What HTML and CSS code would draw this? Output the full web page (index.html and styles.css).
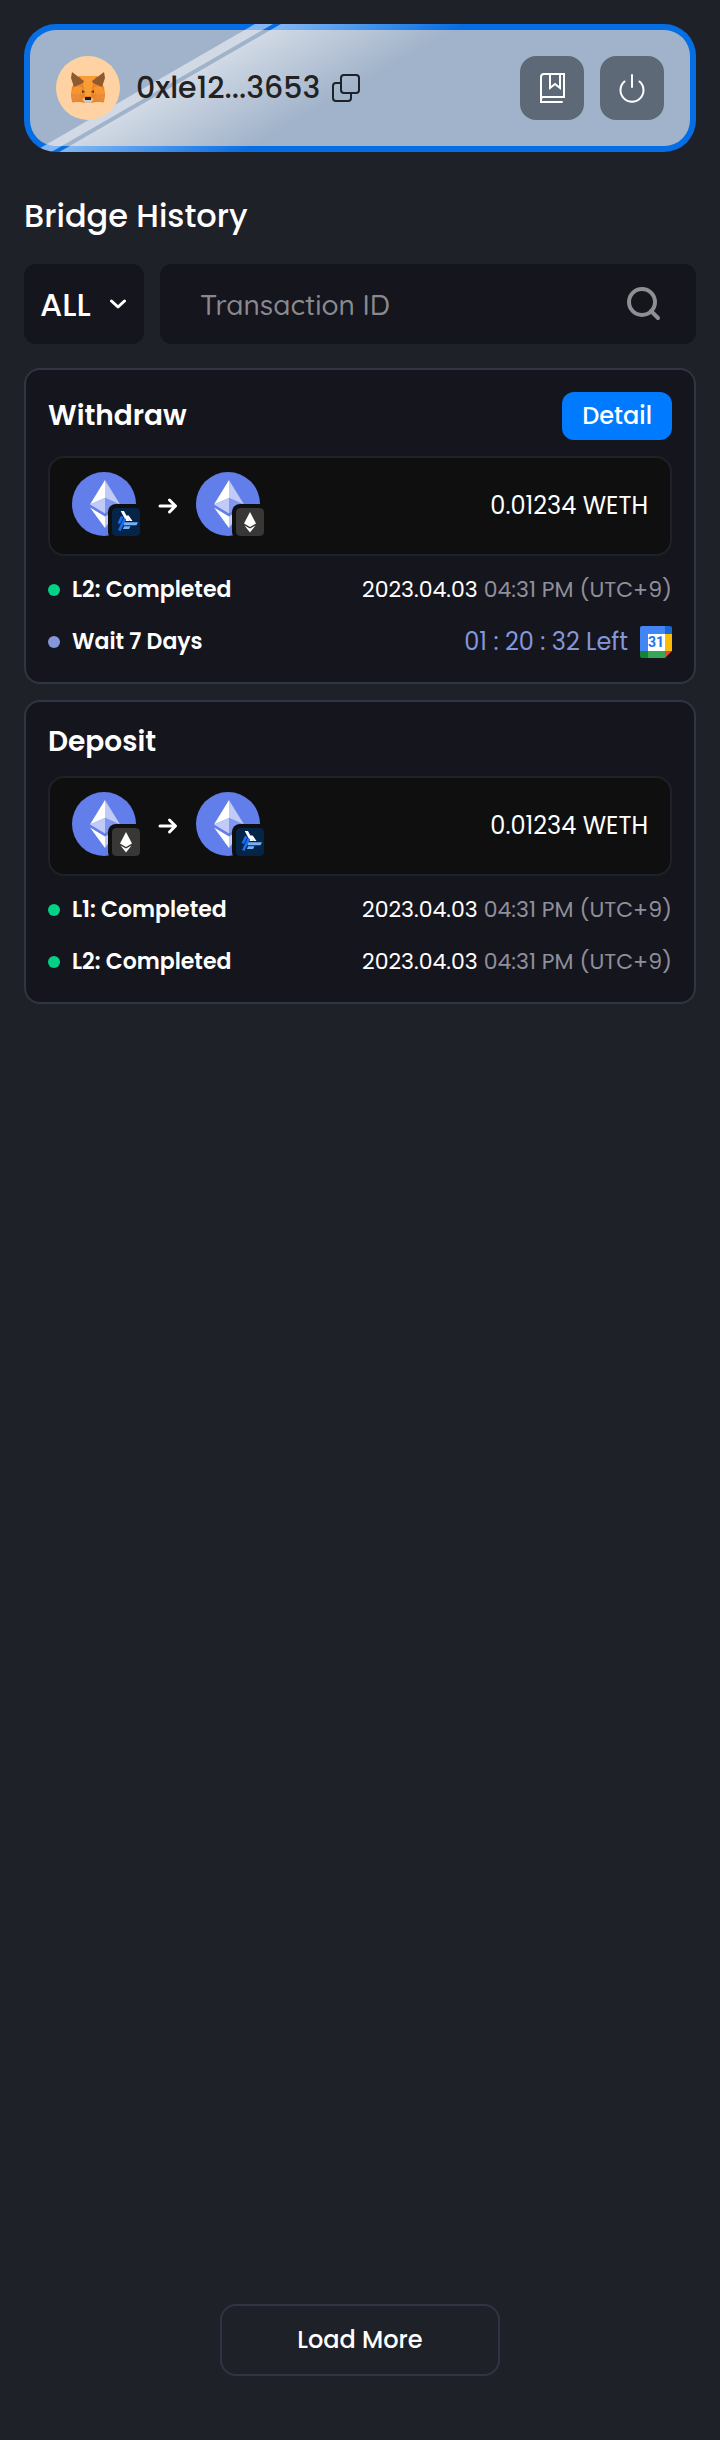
FILE: index.html
```html
<!DOCTYPE html>
<html lang="en">
<head>
<meta charset="utf-8">
<meta name="viewport" content="width=device-width, initial-scale=1">
<title>Bridge History</title>
<link rel="stylesheet" href="styles.css">
</head>
<body>
<svg class="sprite" aria-hidden="true">
  <symbol id="eth" viewBox="0 0 64 64">
    <circle cx="32" cy="32" r="32" fill="#627eea"/>
    <path d="M33 8v18L18 32.500z" fill="#fff"/>
    <path d="M33 8v18l15 6.500z" fill="#c1cbf7"/>
    <path d="M18 32.500 33 26v15.500z" fill="#c1cbf7"/>
    <path d="M33 26l15 6.500-15 9z" fill="#8298ee"/>
    <path d="M18 35.500 33 44.500V56z" fill="#fff"/>
    <path d="M33 44.500l15-9L33 56z" fill="#c1cbf7"/>
  </symbol>
  <symbol id="layer1" viewBox="0 0 28 28">
    <rect width="28" height="28" rx="4" fill="#383736"/>
    <path d="M14 4l6 11.500-6 3.500-6-3.500z" fill="#fff"/>
    <path d="M8.500 17.500 14 20.500l5.500-3L14 24.500z" fill="#fff"/>
  </symbol>
  <symbol id="layer2" viewBox="0 0 28 28">
    <rect width="28" height="28" rx="4" fill="#042548"/>
    <path d="M8.700 3H12l5.300 10H14zM13.800 7.500h2.900L20.500 13h-2.800z" fill="#fff"/>
    <path d="M10.300 8.300 6.800 15.500M13 10.500 7.300 22.500" fill="none" stroke="#1b6df0" stroke-width="2.800"/>
    <path d="M12.500 14.300H26l-1.500 3H11.500zM12.200 18.300H18.500l-1.500 2.700H10.800z" fill="#74b2f8"/>
  </symbol>
  <symbol id="arrow" viewBox="0 0 20 20">
    <path d="M2 10h15M11.500 4l6 6-6 6" fill="none" stroke="#fff" stroke-width="3" stroke-linecap="round" stroke-linejoin="round"/>
  </symbol>
</svg>
<main class="page">
  <header class="wallet">
    <svg class="avatar" viewBox="0 0 64 64" role="img" aria-label="MetaMask">
      <circle cx="32" cy="32" r="32" fill="#ffd2a3"/>
      <path d="M23 20h18l7 11 1 8-1 7-9 0-3 1h-8l-3-1-9 0-1-7 1-8z" fill="#ee8420"/>
      <path d="M24 20h16l-4 11-1 9h-6l-1-9z" fill="#f99d37"/>
      <path d="M18 30l8 1 1 7H15z M46 30l-8 1-1 7h12z" fill="#f6942f"/>
      <path d="M15 38h9l1 5-8 4z M49 38h-9l-1 5 8 4z" fill="#e98b3a"/>
      <path d="M16 16l12 9-1 2-9 4-3-9z M48 16l-12 9 1 2 9 4 3-9z" fill="#8f5a30"/>
      <path d="M26 34l3 2-3 1z M38 34l-3 2 3 1z" fill="#393939"/>
      <path d="M26 43l3-1h6l3 1-3 4h-6z" fill="#d0c3b8"/>
      <path d="M29 41h6v3h-6z" fill="#1c1c1c"/>
    </svg>
    <span class="address">0xle12...3653</span>
    <button class="copy" type="button" aria-label="Copy address">
      <svg viewBox="0 0 28 28" width="28" height="28"><path d="M9 9H4a3 3 0 0 0-3 3v12a3 3 0 0 0 3 3h12a3 3 0 0 0 3-3v-5" /><rect x="9" y="1" width="18" height="18" rx="3"/></svg>
    </button>
    <div class="actions">
      <button class="tile" type="button" aria-label="History">
        <svg viewBox="0 0 32 32"><path d="M5 30V5q0-3 3-3h20v23H7q-2 0-2 2.500V30h21M14 2v14l5-4 5 4V2"/></svg>
      </button>
      <button class="tile" type="button" aria-label="Disconnect">
        <svg viewBox="0 0 32 32"><path d="M16 3v12M8.500 9.500a11.500 11.500 0 1 0 15 0"/></svg>
      </button>
    </div>
  </header>

  <h1 class="title">Bridge History</h1>

  <form class="filters">
    <div class="picker">
      <select class="select" aria-label="Transaction type"><option>ALL</option><option>Deposit</option><option>Withdraw</option></select>
      <svg class="chevron" viewBox="0 0 16 16"><path d="M1.500 5l6.500 6 6.500-6"/></svg>
    </div>
    <label class="search">
      <input class="search-input" type="text" placeholder="Transaction ID" aria-label="Transaction ID">
      <svg class="search-icon" viewBox="0 0 36 36"><circle cx="16" cy="16" r="13"/><path d="M25 25l7 7"/></svg>
    </label>
  </form>

  <section class="cards">
    <article class="card">
      <div class="card-head"><h2 class="card-title">Withdraw</h2><button class="detail" type="button">Detail</button></div>
      <div class="transfer">
        <span class="token"><svg class="coin"><use href="#eth"/></svg><svg class="badge"><use href="#layer2"/></svg></span>
        <svg class="arrow"><use href="#arrow"/></svg>
        <span class="token"><svg class="coin"><use href="#eth"/></svg><svg class="badge"><use href="#layer1"/></svg></span>
        <span class="amount">0.01234 WETH</span>
      </div>
      <div class="row"><span class="dot"></span><span class="status">L2: Completed</span><time class="date">2023.04.03 <span class="hour">04:31 PM (UTC+9)</span></time></div>
      <div class="row"><span class="dot dot-wait"></span><span class="status">Wait 7 Days</span><span class="countdown">01 : 20 : 32 Left</span>
        <svg class="calendar" viewBox="0 0 32 32" role="img" aria-label="Google Calendar">
          <path d="M2 0h23v8H8v17H0V2q0-2 2-2z" fill="#4285f4"/>
          <path d="M25 0h5q2 0 2 2v6h-7z" fill="#1967d2"/>
          <path d="M25 8h7v17h-7z" fill="#fbbc04"/>
          <path d="M0 25h8v7H2q-2 0-2-2z" fill="#188038"/>
          <path d="M8 25h17v7H8z" fill="#34a853"/>
          <path d="M25 25h7l-7 7z" fill="#ea4335"/>
          <path d="M8 8h17v17H8z" fill="#fff"/>
          <text x="16" y="21" text-anchor="middle" class="calendar-day">31</text>
        </svg>
      </div>
    </article>

    <article class="card">
      <div class="card-head"><h2 class="card-title">Deposit</h2></div>
      <div class="transfer">
        <span class="token"><svg class="coin"><use href="#eth"/></svg><svg class="badge"><use href="#layer1"/></svg></span>
        <svg class="arrow"><use href="#arrow"/></svg>
        <span class="token"><svg class="coin"><use href="#eth"/></svg><svg class="badge"><use href="#layer2"/></svg></span>
        <span class="amount">0.01234 WETH</span>
      </div>
      <div class="row"><span class="dot"></span><span class="status">L1: Completed</span><time class="date">2023.04.03 <span class="hour">04:31 PM (UTC+9)</span></time></div>
      <div class="row"><span class="dot"></span><span class="status">L2: Completed</span><time class="date">2023.04.03 <span class="hour">04:31 PM (UTC+9)</span></time></div>
    </article>
  </section>

  <button class="more" type="button">Load More</button>
</main>
</body>
</html>
```
FILE: styles.css
```css
* { box-sizing: border-box; }
body {
  margin: 0;
  background: #1f2128;
  color: #fff;
  font-family: Poppins, Inter, "Open Sans", sans-serif;
}
button, input, select { font: inherit; color: inherit; }
button { border: 0; padding: 0; background: none; cursor: pointer; }
h1, h2 { margin: 0; font-weight: 500; }
svg { display: block; flex: none; }
.sprite { position: absolute; width: 0; height: 0; }

.page {
  display: flex;
  flex-direction: column;
  min-height: 100vh;
  padding: 24px 24px 64px;
}

.wallet {
  display: flex;
  align-items: center;
  padding: 26px;
  border: 6px solid transparent;
  border-radius: 32px;
  background:
    linear-gradient(150deg, transparent 115px, #ffffff80 116px, #ffffff80 124px, transparent 125px, transparent 128px, #ffffff80 129px, transparent 220px) border-box,
    linear-gradient(#a1b3ca, #a1b3ca) padding-box,
    #066ee5 border-box;
}
.avatar { width: 64px; height: 64px; }
.address {
  margin: 0 12px 0 16px;
  color: #222;
  font-size: 30px;
  line-height: 48px;
  font-weight: 500;
}
.copy svg { fill: none; stroke: #1f2128; stroke-width: 2; }
.actions { display: flex; gap: 16px; margin-left: auto; }
.tile {
  display: grid;
  place-items: center;
  width: 64px;
  height: 64px;
  border-radius: 16px;
  background: #5e6978;
}
.tile svg { width: 32px; height: 32px; fill: none; stroke: #fff; stroke-width: 2; stroke-linecap: round; }

.title { margin: 40px 0 24px; font-size: 32px; line-height: 48px; }

.filters { display: flex; gap: 16px; margin-bottom: 24px; }
.picker { position: relative; flex: none; width: 120px; }
.select {
  width: 100%;
  height: 80px;
  padding: 0 16px;
  border: 0;
  border-radius: 12px;
  background: #15151e;
  font-size: 32px;
  font-weight: 500;
  appearance: none;
}
.chevron {
  position: absolute;
  top: 32px;
  right: 18px;
  width: 16px;
  height: 16px;
  fill: none;
  stroke: #fff;
  stroke-width: 3;
  stroke-linecap: round;
  stroke-linejoin: round;
  pointer-events: none;
}
.search {
  display: flex;
  flex: 1;
  align-items: center;
  min-width: 0;
  padding: 0 34px 0 40px;
  border-radius: 12px;
  background: #15151e;
}
.search-input {
  flex: 1;
  min-width: 0;
  height: 80px;
  padding: 0;
  border: 0;
  outline: 0;
  background: none;
  font-family: Quicksand, Poppins, Inter, sans-serif;
  font-size: 28px;
  font-weight: 500;
}
.search-input::placeholder { color: #8a8a8e; opacity: 1; }
.search-icon { width: 36px; height: 36px; fill: none; stroke: #8f8e93; stroke-width: 4; stroke-linecap: round; }

.cards { display: flex; flex-direction: column; gap: 16px; }
.card {
  display: flex;
  flex-direction: column;
  gap: 16px;
  padding: 22px;
  border: 2px solid #313442;
  border-radius: 16px;
  background: #15151e;
}
.card-head { display: flex; align-items: center; justify-content: space-between; }
.card-title { font-size: 28px; line-height: 36px; font-weight: 600; }
.detail {
  padding: 0 20px;
  border-radius: 12px;
  background: #007aff;
  font-size: 24px;
  line-height: 48px;
  font-weight: 500;
}
.transfer {
  display: flex;
  align-items: center;
  padding: 14px 22px 18px;
  border: 2px solid #1f2128;
  border-radius: 16px;
  background: #0f0f10;
}
.token { position: relative; }
.coin { width: 64px; height: 64px; }
.badge {
  position: absolute;
  right: -8px;
  bottom: -4px;
  width: 36px;
  height: 36px;
  padding: 4px;
  border-radius: 8px;
  background: #0f0f10;
}
.arrow { width: 20px; height: 20px; margin: 4px 18px 0 22px; }
.amount { margin: 4px 0 0 auto; font-size: 24px; line-height: 36px; }

.row { display: flex; align-items: center; }
.dot { flex: none; width: 12px; height: 12px; margin-right: 12px; border-radius: 50%; background: #03d187; }
.dot-wait { background: #8497db; }
.status { font-size: 22px; line-height: 36px; font-weight: 600; }
.date, .countdown { margin-left: auto; font-size: 22px; line-height: 36px; }
.hour { color: #8f8f9b; }
.countdown { margin-right: 12px; color: #8497db; font-size: 24px; }
.calendar { width: 32px; height: 32px; }
.calendar-day { fill: #1a73e8; font-family: Roboto, sans-serif; font-size: 14px; font-weight: 700; }

.more {
  align-self: center;
  width: 280px;
  margin-top: auto;
  border: 2px solid #313442;
  border-radius: 16px;
  font-size: 24px;
  line-height: 68px;
  font-weight: 500;
}
```
